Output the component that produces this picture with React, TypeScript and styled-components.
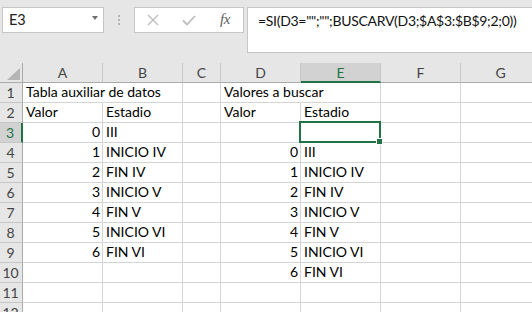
import React from "react";
import styled, { createGlobalStyle, css } from "styled-components";

const Global = createGlobalStyle`
  html, body { margin: 0; padding: 0; overflow: hidden; background: #ffffff; }
  body { width: 532px; height: 312px; }
  * { box-sizing: border-box; }
`;

const FONT = `"Lato", "Open Sans", "Liberation Sans", sans-serif`;
const GREEN = "#217346";

const Window = styled.div`
  width: 532px;
  height: 312px;
  overflow: hidden;
  display: flex;
  flex-direction: column;
  font-family: ${FONT};
`;

const TopBar = styled.div`
  height: 63px;
  flex: none;
  background: #e6e6e6;
  display: flex;
  align-items: flex-start;
  padding: 7px 0 0 2px;
`;

const NameBox = styled.div`
  width: 102px;
  height: 26px;
  background: #fff;
  border: 1px solid #c6c6c6;
  display: flex;
  align-items: center;
  justify-content: space-between;
  padding: 0 5px 1px 6px;
  font-size: 14.5px;
  color: #222;
`;

const DropArrow = styled.span`
  width: 0;
  height: 0;
  border-left: 3.5px solid transparent;
  border-right: 3.5px solid transparent;
  border-top: 4px solid #707070;
  margin-top: -3px;
`;

const Grip = styled.div`
  width: 30px;
  height: 26px;
  display: flex;
  flex-direction: column;
  align-items: center;
  justify-content: center;
  gap: 2px;
`;

const GripDot = styled.span`
  width: 2px;
  height: 2px;
  background: #b4b4b4;
`;

const ButtonBox = styled.div`
  width: 110px;
  height: 26px;
  background: #fff;
  border: 1px solid #c6c6c6;
  display: flex;
`;

const BarButton = styled.div`
  width: 36px;
  height: 100%;
  display: flex;
  align-items: center;
  justify-content: center;
`;

const Fx = styled.span`
  font-family: "Liberation Serif", "DejaVu Serif", serif;
  font-style: italic;
  font-size: 15px;
  color: #5e5e5e;
  letter-spacing: -0.5px;
  margin-top: -2px;
`;

const FormulaBox = styled.div`
  flex: 1;
  margin-left: 3px;
  margin-right: -2px;
  height: 46px;
  background: #fff;
  border: 1px solid #c6c6c6;
  padding: 3px 0 0 10px;
  font-size: 14px;
  letter-spacing: -0.3px;
  line-height: 20px;
  color: #111;
  white-space: nowrap;
`;

const Sheet = styled.div`
  display: grid;
  grid-template-columns: 23px 80px 80px 38px 80px 80px 80px 80px;
  grid-auto-rows: 20px;
  background: #fff;
`;

const Corner = styled.div`
  background: #e6e6e6;
  border-right: 1px solid #ababab;
  border-bottom: 1px solid #ababab;
  position: relative;
`;

const CornerTriangle = styled.span`
  position: absolute;
  right: 2px;
  bottom: 2px;
  width: 0;
  height: 0;
  border-left: 13px solid transparent;
  border-bottom: 12px solid #b5b5b5;
`;

const ColHeader = styled.div<{ $active?: boolean }>`
  background: #e6e6e6;
  border-right: 1px solid #c6c6c6;
  border-bottom: 1px solid #ababab;
  display: flex;
  align-items: center;
  justify-content: center;
  font-size: 14px;
  color: #444;
  padding-bottom: 1px;
  ${(p) =>
    p.$active &&
    css`
      background: #d2d2d2;
      color: ${GREEN};
      border-bottom: 2px solid ${GREEN};
      padding-bottom: 0;
    `}
`;

const RowHeader = styled.div<{ $active?: boolean }>`
  background: #e6e6e6;
  border-right: 1px solid #ababab;
  border-bottom: 1px solid #c6c6c6;
  display: flex;
  align-items: center;
  justify-content: center;
  font-size: 14px;
  color: #444;
  padding-right: 1px;
  ${(p) =>
    p.$active &&
    css`
      background: #d2d2d2;
      color: ${GREEN};
      border-right: 2px solid ${GREEN};
    `}
`;

const Cell = styled.div<{ $num?: boolean; $spill?: boolean }>`
  position: relative;
  border-right: 1px solid ${(p) => (p.$spill ? "transparent" : "#d4d4d4")};
  border-bottom: 1px solid #d4d4d4;
  display: flex;
  align-items: flex-end;
  justify-content: ${(p) => (p.$num ? "flex-end" : "flex-start")};
  padding: 0 2px 1px 3px;
  font-size: 14px;
  line-height: 18px;
  color: #000;
  white-space: nowrap;
  overflow: visible;
`;

const CellText = styled.span<{ $spill?: boolean }>`
  ${(p) => p.$spill && css`position: relative; z-index: 1;`}
`;

const Selection = styled.div`
  position: absolute;
  left: -2px;
  top: -2px;
  right: -1px;
  bottom: -1px;
  border: 2px solid ${GREEN};
  z-index: 2;
  pointer-events: none;
`;

const FillHandle = styled.span`
  position: absolute;
  right: -4px;
  bottom: -4px;
  width: 7px;
  height: 7px;
  background: ${GREEN};
  border: 1px solid #fff;
`;

const COLS = ["A", "B", "C", "D", "E", "F", "G"];
const STATES = ["III", "INICIO IV", "FIN IV", "INICIO V", "FIN V", "INICIO VI", "FIN VI"];

type CellData = { text?: string; num?: boolean; spill?: boolean; selected?: boolean };

function buildRows(): CellData[][] {
  const rows: CellData[][] = [];
  for (let r = 1; r <= 12; r++) {
    const row: CellData[] = COLS.map(() => ({}));
    if (r === 1) {
      row[0] = { text: "Tabla auxiliar de datos", spill: true };
      row[3] = { text: "Valores a buscar", spill: true };
    }
    if (r === 2) {
      row[0] = { text: "Valor" };
      row[1] = { text: "Estadio" };
      row[3] = { text: "Valor" };
      row[4] = { text: "Estadio" };
    }
    if (r >= 3 && r <= 9) {
      row[0] = { text: String(r - 3), num: true };
      row[1] = { text: STATES[r - 3] };
    }
    if (r >= 4 && r <= 10) {
      row[3] = { text: String(r - 4), num: true };
      row[4] = { text: STATES[r - 4] };
    }
    if (r === 3) row[4] = { selected: true };
    rows.push(row);
  }
  return rows;
}

const XIcon = () => (
  <svg width="12" height="12" viewBox="0 0 12 12">
    <path d="M1 1 L11 11 M11 1 L1 11" stroke="#bdbdbd" strokeWidth="1.4" fill="none" />
  </svg>
);

const CheckIcon = () => (
  <svg width="14" height="11" viewBox="0 0 14 11">
    <path d="M1 5.5 L5 9.5 L13 1" stroke="#bdbdbd" strokeWidth="1.8" fill="none" />
  </svg>
);

export default function App() {
  const rows = buildRows();
  return (
    <>
      <Global />
      <Window>
        <TopBar>
          <NameBox>
            <span>E3</span>
            <DropArrow />
          </NameBox>
          <Grip>
            <GripDot />
            <GripDot />
            <GripDot />
          </Grip>
          <ButtonBox>
            <BarButton>
              <XIcon />
            </BarButton>
            <BarButton>
              <CheckIcon />
            </BarButton>
            <BarButton>
              <Fx>fx</Fx>
            </BarButton>
          </ButtonBox>
          <FormulaBox>=SI(D3="";"";BUSCARV(D3;$A$3:$B$9;2;0))</FormulaBox>
        </TopBar>
        <Sheet>
          <Corner>
            <CornerTriangle />
          </Corner>
          {COLS.map((c) => (
            <ColHeader key={c} $active={c === "E"}>
              {c}
            </ColHeader>
          ))}
          {rows.map((row, i) => (
            <React.Fragment key={i}>
              <RowHeader $active={i === 2}>{i + 1}</RowHeader>
              {row.map((cell, j) => (
                <Cell key={j} $num={cell.num} $spill={cell.spill}>
                  {cell.text && <CellText $spill={cell.spill}>{cell.text}</CellText>}
                  {cell.selected && (
                    <Selection>
                      <FillHandle />
                    </Selection>
                  )}
                </Cell>
              ))}
            </React.Fragment>
          ))}
        </Sheet>
      </Window>
    </>
  );
}
